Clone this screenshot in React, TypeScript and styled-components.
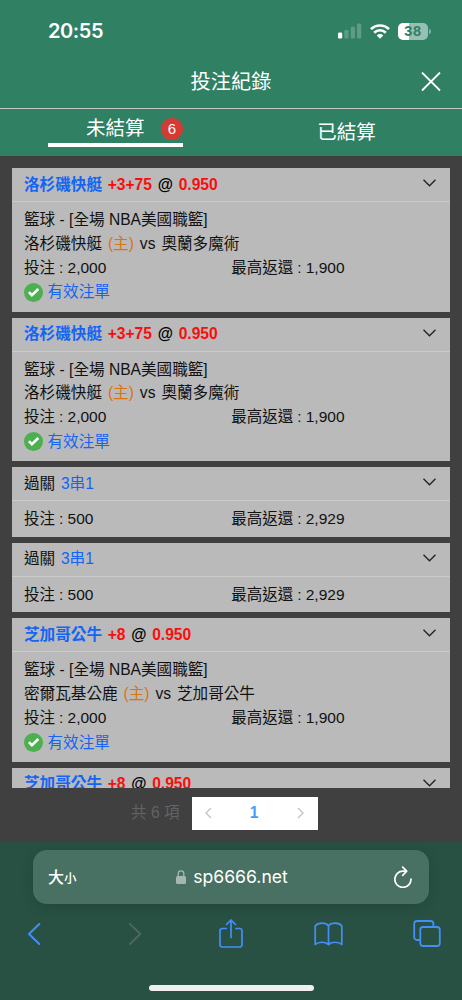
import React from "react";
import styled, { createGlobalStyle } from "styled-components";

const GlobalStyle = createGlobalStyle`
  * { box-sizing: border-box; }
  body { margin: 0; background: #404040; }
`;

const Screen = styled.div`
  width: 462px;
  height: 1000px;
  overflow: hidden;
  display: flex;
  flex-direction: column;
  background: #404040;
  font-family: "Liberation Sans", "Noto Sans CJK TC", sans-serif;
  font-size: 15.6px;
  color: #111;
`;

const Header = styled.header`
  height: 156px;
  flex: none;
  background: #308064;
  color: #fff;
`;

const StatusBar = styled.div`
  height: 60px;
  padding: 2px 31px 0 48px;
  display: flex;
  align-items: center;
  justify-content: space-between;
`;

const Clock = styled.span`
  font: 600 20px/24px Inter, sans-serif;
  letter-spacing: -0.4px;
`;

const StatusIcons = styled.div`
  display: flex;
  align-items: center;
`;

const WifiIcon = styled.svg`
  margin-left: 8px;
`;

const Battery = styled.div`
  width: 30px;
  height: 17px;
  margin-left: 8.5px;
  border-radius: 5px;
  background: linear-gradient(90deg, #fff 38%, #98c0b2 38%);
  color: #308064;
  font: 700 14.5px/17px "Liberation Sans", sans-serif;
  letter-spacing: 0.8px;
  text-align: center;
`;

const BatteryCap = styled.div`
  width: 2px;
  height: 5px;
  margin-left: 1px;
  border-radius: 0 2px 2px 0;
  background: #83b2a2;
`;

const TitleBar = styled.div`
  height: 49px;
  padding: 0 21px 5px;
  display: grid;
  grid-template-columns: 20px 1fr 20px;
  align-items: center;
  border-bottom: 1px solid #c3cac6;
`;

const Title = styled.h1`
  margin: 0;
  grid-column: 2;
  text-align: center;
  font-weight: 400;
  font-size: 20.2px;
  line-height: 30px;
`;

const Tabs = styled.nav`
  height: 47px;
  display: grid;
  grid-template-columns: 1fr 1fr;
  font-size: 19.5px;
  font-weight: 400;
  line-height: 28px;
`;

const ActiveTab = styled.div`
  justify-self: center;
  width: 135px;
  height: 38px;
  padding: 5px 0 0 38px;
  display: flex;
  align-items: flex-start;
  border-bottom: 4px solid #fff;
`;

const Tab = styled.div`
  text-align: center;
  padding-top: 9px;
`;

const Count = styled.span`
  width: 22px;
  height: 22px;
  margin: 4px 0 0 auto;
  border-radius: 50%;
  background: #d53a35;
  font-size: 15px;
  line-height: 22px;
  text-align: center;
`;

const List = styled.main`
  height: 632px;
  flex: none;
  padding: 12px 12px 0;
  overflow: hidden;
`;

const Card = styled.article<{ $short?: boolean }>`
  height: ${(p) => (p.$short ? "69.7px" : "143.5px")};
  margin-bottom: 6px;
  background: #bababa;
`;

const CardHead = styled.div`
  height: 34px;
  padding: 0 14px 0 12px;
  display: flex;
  align-items: center;
  justify-content: space-between;
  border-bottom: 1px solid #cacaca;
  line-height: 24px;
  white-space: pre;
  word-spacing: 1.4px;

  svg { margin-bottom: 3px; }
`;

const CardBody = styled.div`
  padding: 6px 12px 0;
`;

const Line = styled.div<{ $spread?: boolean }>`
  height: 23.8px;
  line-height: 23.8px;
  display: flex;
  align-items: center;
  white-space: pre;
  word-spacing: ${(p) => (p.$spread ? "1.6px" : "0")};
`;

const Amounts = styled(Line)`
  font-size: 15.5px;
  word-spacing: -0.2px;
`;

const Stake = styled.span`
  width: 207.2px;
`;

const Tint = styled.span<{ $tone: "blue" | "red" | "orange" | "black"; $bold?: boolean }>`
  color: ${(p) => ({ blue: "#1464f6", red: "#fc0d0d", orange: "#dc730c", black: "#000" })[p.$tone]};
  font-weight: ${(p) => (p.$bold ? 700 : 400)};
`;

const Valid = styled(Line)`
  height: 26px;
  margin-left: -0.5px;
  gap: 5px;
  color: #1464f6;
`;

const Pager = styled.div`
  height: 54px;
  flex: none;
  padding: 8.5px 0 0 131px;
  display: flex;
  align-items: flex-start;
  gap: 11.5px;
  line-height: 32px;
  color: #626367;
`;

const Total = styled.span`
  width: 49px;
  white-space: nowrap;
`;

const PageBox = styled.div`
  width: 126px;
  height: 33px;
  padding: 0 14px 0 13px;
  display: flex;
  align-items: center;
  justify-content: space-between;
  background: #fff;
  color: #409eff;
  font-weight: 700;
`;

const Browser = styled.footer`
  flex: 1;
  padding-top: 8px;
  display: flex;
  flex-direction: column;
  align-items: center;
  background: #285143;
`;

const AddressBar = styled.div`
  width: 396px;
  height: 54px;
  padding: 0 17px 0 15px;
  display: grid;
  grid-template-columns: 60px 1fr 60px;
  align-items: center;
  border-radius: 14px;
  background: #497163;
  box-shadow: 0 3px 14px rgba(0, 0, 0, 0.14);
  color: #fff;
`;

const TextSize = styled.span`
  font-family: "Noto Sans CJK TC", sans-serif;
  font-size: 16px;
  font-weight: 500;
  line-height: 24px;
  small { font-size: 12.5px; }
`;

const Address = styled.div`
  padding-left: 4px;
  display: flex;
  align-items: center;
  justify-content: center;
  gap: 7px;
  font: 400 17.6px/24px Inter, sans-serif;
`;

const ReloadIcon = styled.svg`
  justify-self: end;
  margin-bottom: 1px;
`;

const Toolbar = styled.div`
  width: 100%;
  height: 62px;
  padding: 0 21px 3px 27px;
  display: grid;
  grid-template-columns: 100.5px 90.5px 96px 1fr 28px;
  align-items: center;
`;

const HomeIndicator = styled.div`
  width: 165px;
  height: 6px;
  margin-top: 19px;
  border-radius: 3px;
  background: #efefef;
`;

const Chevron = () => (
  <svg width="13" height="8" viewBox="0 0 13 8" fill="none" stroke="#222" strokeWidth="1.3">
    <path d="M.5.7 6.5 6.8 12.5.7" />
  </svg>
);

const Check = () => (
  <svg width="19" height="19" viewBox="0 0 19 19">
    <circle cx="9.5" cy="9.5" r="9.5" fill="#4caf50" />
    <path d="m4.9 9.2 3 3 6.4-6.2" fill="none" stroke="#fff" strokeWidth="2.6" />
  </svg>
);

interface Bet {
  pick?: string;
  line?: string;
  home?: string;
  away?: string;
  stake: string;
  payout: string;
}

const clippers: Bet = { pick: "洛杉磯快艇", line: "+3+75", home: "洛杉磯快艇", away: "奧蘭多魔術", stake: "2,000", payout: "1,900" };
const parlay: Bet = { stake: "500", payout: "2,929" };
const bulls: Bet = { pick: "芝加哥公牛", line: "+8", home: "密爾瓦基公鹿", away: "芝加哥公牛", stake: "2,000", payout: "1,900" };
const bets = [clippers, clippers, parlay, parlay, bulls, bulls];

const BetCard = ({ bet }: { bet: Bet }) => (
  <Card $short={!bet.pick}>
    <CardHead>
      {bet.pick ? (
        <span>
          <Tint $tone="blue" $bold>{bet.pick} </Tint>
          <Tint $tone="red" $bold>{bet.line}</Tint>
          <Tint $tone="black" $bold> @ </Tint>
          <Tint $tone="red" $bold>0.950</Tint>
        </span>
      ) : (
        <span>過關 <Tint $tone="blue">3串1</Tint></span>
      )}
      <Chevron />
    </CardHead>
    <CardBody>
      {bet.pick && <Line>籃球 - [全場 NBA美國職籃]</Line>}
      {bet.pick && (
        <Line $spread>{bet.home} <Tint $tone="orange">(主)</Tint> vs {bet.away}</Line>
      )}
      <Amounts>
        <Stake>投注 : {bet.stake}</Stake>
        <span>最高返還 : {bet.payout}</span>
      </Amounts>
      {bet.pick && <Valid><Check />有效注單</Valid>}
    </CardBody>
  </Card>
);

export default function App() {
  return (
    <Screen>
      <GlobalStyle />
      <Header>
        <StatusBar>
          <Clock>20:55</Clock>
          <StatusIcons>
            <svg width="24" height="16" viewBox="0 0 24 16" fill="#5f9c86">
              <rect x="0" y="9.5" width="4.2" height="6" rx="1.2" fill="#fff" />
              <rect x="6.3" y="7" width="4.2" height="8.5" rx="1.2" />
              <rect x="12.7" y="3.8" width="4.2" height="11.7" rx="1.2" />
              <rect x="19" y="0.5" width="4.2" height="15" rx="1.2" />
            </svg>
            <WifiIcon width="20" height="15" viewBox="0 0 20 15" fill="none" stroke="#fff" strokeWidth="2.6">
              <path d="M1 5.2C6 .2 14 .2 19 5.2M4.2 8.7c3.3-3.2 8.3-3.2 11.6 0" />
              <path d="M6.7 11.4c1.9-1.8 4.7-1.8 6.6 0L10 14.7z" fill="#fff" stroke="none" />
            </WifiIcon>
            <Battery>38</Battery>
            <BatteryCap />
          </StatusIcons>
        </StatusBar>
        <TitleBar>
          <Title>投注紀錄</Title>
          <svg width="20" height="20" viewBox="0 0 20 20" stroke="#fff" strokeWidth="1.8">
            <path d="m1 .5 18 18M19 .5 1 18.5" />
          </svg>
        </TitleBar>
        <Tabs>
          <ActiveTab>未結算<Count>6</Count></ActiveTab>
          <Tab>已結算</Tab>
        </Tabs>
      </Header>
      <List>
        {bets.map((bet, i) => <BetCard key={i} bet={bet} />)}
      </List>
      <Pager>
        <Total>共 6 項</Total>
        <PageBox>
          <svg width="7" height="12" viewBox="0 0 7 12" fill="none" stroke="#c0c4cc" strokeWidth="1.4"><path d="M6 1 1 6l5 5" /></svg>
          <span>1</span>
          <svg width="7" height="12" viewBox="0 0 7 12" fill="none" stroke="#c0c4cc" strokeWidth="1.4"><path d="m1 1 5 5-5 5" /></svg>
        </PageBox>
      </Pager>
      <Browser>
        <AddressBar>
          <TextSize>大<small>小</small></TextSize>
          <Address>
            <svg width="10" height="14" viewBox="0 0 10 14">
              <path d="M2.2 7V3.7a2.8 2.8 0 0 1 5.6 0V7" fill="none" stroke="#a4b8b1" strokeWidth="1.3" />
              <rect y="6" width="10" height="8" rx="1.5" fill="#a4b8b1" />
            </svg>
            sp6666.net
          </Address>
          <ReloadIcon width="18" height="22" viewBox="0 0 18 22" fill="none" stroke="#fff" strokeWidth="1.7" strokeLinecap="round" strokeLinejoin="round">
            <path d="M12.6 5.2H9.3A8.1 8.1 0 1 0 17 13M8.7 1.2l4 4-4 4.1" />
          </ReloadIcon>
        </AddressBar>
        <Toolbar>
          <svg width="14" height="22" viewBox="0 0 14 22" fill="none" stroke="#428ffa" strokeWidth="2" strokeLinecap="round" strokeLinejoin="round"><path d="M12.3 1 2 11l10.3 10" /></svg>
          <svg width="14" height="22" viewBox="0 0 14 22" fill="none" stroke="#4c675d" strokeWidth="2" strokeLinecap="round" strokeLinejoin="round"><path d="m2 1 10.3 10L2 21" /></svg>
          <svg width="26" height="30" viewBox="-1 0 26 30" fill="none" stroke="#428ffa" strokeWidth="1.7" strokeLinecap="round" strokeLinejoin="round">
            <path d="M7.2 9.5H3.3A2.3 2.3 0 0 0 1 11.9v13.8A2.3 2.3 0 0 0 3.4 28h17.2a2.3 2.3 0 0 0 2.4-2.3V11.9a2.3 2.3 0 0 0-2.4-2.4h-3.8M12 18.5V1.2M7.5 5.5 12 1l4.5 4.5" />
          </svg>
          <svg width="29" height="24" viewBox="0 0 29 24" fill="none" stroke="#428ffa" strokeWidth="1.7" strokeLinejoin="round">
            <path d="M14.5 4C12 .2 4 .2 1.2 4v18.5c3-3 10-3 13.3 0 3.3-3 10.3-3 13.3 0V4C25 .2 17 .2 14.5 4zv18.5" />
          </svg>
          <svg width="28" height="27" viewBox="0 0 28 27" fill="none" stroke="#428ffa" strokeWidth="1.8">
            <rect x="7.3" y="7" width="19.5" height="19" rx="2.8" />
            <path d="M7.3 20H4a2.8 2.8 0 0 1-2.8-2.8V3.8A2.8 2.8 0 0 1 4 1h13.6a2.8 2.8 0 0 1 2.8 2.8V7" />
          </svg>
        </Toolbar>
        <HomeIndicator />
      </Browser>
    </Screen>
  );
}
